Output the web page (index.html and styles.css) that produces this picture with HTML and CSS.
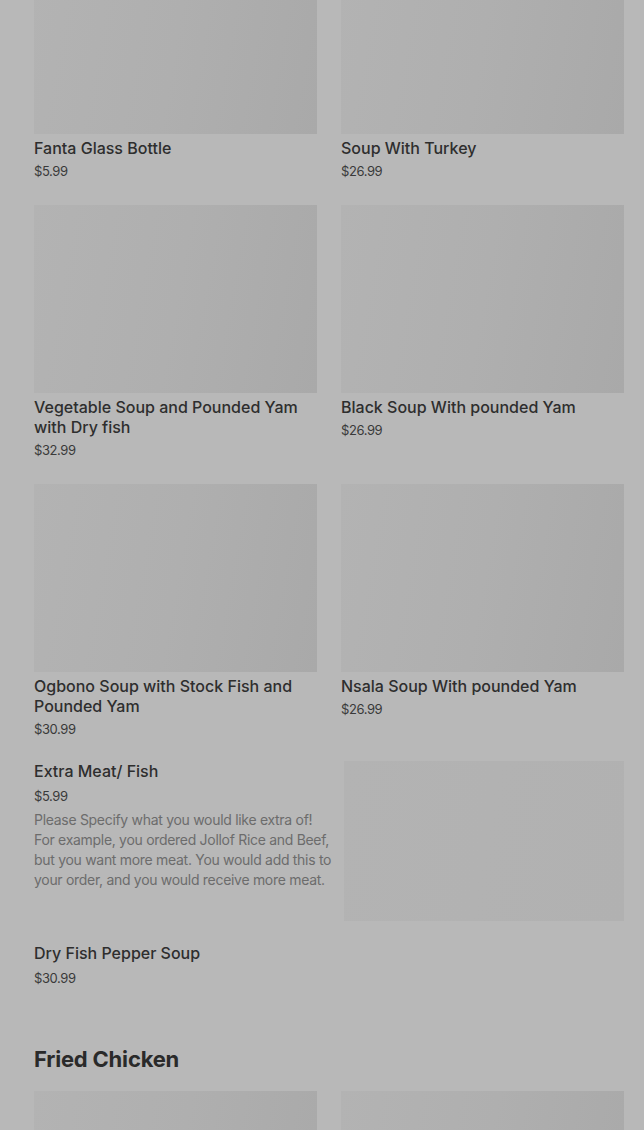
FILE: index.html
```html
<!DOCTYPE html>
<html lang="en">
<head>
    <meta charset="UTF-8">
    <meta name="viewport" content="width=device-width, initial-scale=1.0">
    <title>Menu</title>
    <link rel="stylesheet" href="styles.css">
</head>
<body>
    <div class="menu">
        <div class="grid grid-top">
            <div class="card">
                <div class="thumb"></div>
                <div class="item-title">Fanta Glass Bottle</div>
                <div class="item-price">$5.99</div>
            </div>
            <div class="card">
                <div class="thumb"></div>
                <div class="item-title">Soup With Turkey</div>
                <div class="item-price">$26.99</div>
            </div>
            <div class="card">
                <div class="thumb"></div>
                <div class="item-title">Vegetable Soup and Pounded Yam with Dry fish</div>
                <div class="item-price">$32.99</div>
            </div>
            <div class="card">
                <div class="thumb"></div>
                <div class="item-title">Black Soup With pounded Yam</div>
                <div class="item-price">$26.99</div>
            </div>
            <div class="card">
                <div class="thumb"></div>
                <div class="item-title">Ogbono Soup with Stock Fish and Pounded Yam</div>
                <div class="item-price">$30.99</div>
            </div>
            <div class="card">
                <div class="thumb"></div>
                <div class="item-title">Nsala Soup With pounded Yam</div>
                <div class="item-price">$26.99</div>
            </div>
        </div>

        <div class="row-item">
            <div class="row-text">
                <div class="item-title">Extra Meat/ Fish</div>
                <div class="item-price row-price">$5.99</div>
                <p class="item-desc">Please Specify what you would like extra of! For example, you ordered Jollof Rice and Beef, but you want more meat. You would add this to your order, and you would receive more meat.</p>
            </div>
            <div class="row-thumb"></div>
        </div>

        <div class="row-item">
            <div class="row-text">
                <div class="item-title">Dry Fish Pepper Soup</div>
                <div class="item-price row-price">$30.99</div>
            </div>
        </div>

        <h2 class="section-title">Fried Chicken</h2>
        <div class="grid">
            <div class="card">
                <div class="thumb"></div>
            </div>
            <div class="card">
                <div class="thumb"></div>
            </div>
        </div>
    </div>
</body>
</html>
```

FILE: styles.css
```css
body, html {
    margin: 0;
    padding: 0;
}

body {
    background-color: #b8b8b8;
    font-family: Inter, "Noto Sans", sans-serif;
    color: #2c2c2c;
    height: 1130px;
    overflow: hidden;
}

.menu {
    padding: 0 20px 0 34px;
}

.grid {
    display: grid;
    grid-template-columns: 283px 283px;
    column-gap: 24px;
    row-gap: 24px;
}

/* page is scrolled, first row is cut off */
.grid-top {
    margin-top: -54px;
}

.thumb {
    height: 188px;
    background: linear-gradient(100deg, #b3b3b3 0%, #afafaf 50%, #a9a9a9 100%);
}

.item-title {
    margin-top: 4px;
    font-size: 16px;
    font-weight: 500;
    line-height: 20px;
    letter-spacing: 0;
    color: #2e2e2e;
}

.item-price {
    margin-top: 3px;
    font-size: 13px;
    line-height: 20px;
    letter-spacing: -0.4px;
    color: #3a3a3a;
}

.row-item {
    display: flex;
    gap: 12px;
    margin-top: 22px;
}

.row-item + .row-item {
    margin-top: 22px;
}

.row-text {
    flex: 1;
}

.row-text .item-title {
    margin-top: 0;
}

.row-price {
    margin-top: 5px;
}

.item-desc {
    margin: 4px 0 0;
    font-size: 14px;
    line-height: 20px;
    letter-spacing: -0.3px;
    color: #6c6c6c;
}

.row-thumb {
    width: 280px;
    height: 160px;
    flex-shrink: 0;
    background: linear-gradient(100deg, #b3b3b3 0%, #b1b1b1 100%);
}

.section-title {
    margin: 57px 0 18px;
    font-size: 22px;
    font-weight: 700;
    line-height: 28px;
    letter-spacing: -0.2px;
    color: #2a2a2a;
}
```
